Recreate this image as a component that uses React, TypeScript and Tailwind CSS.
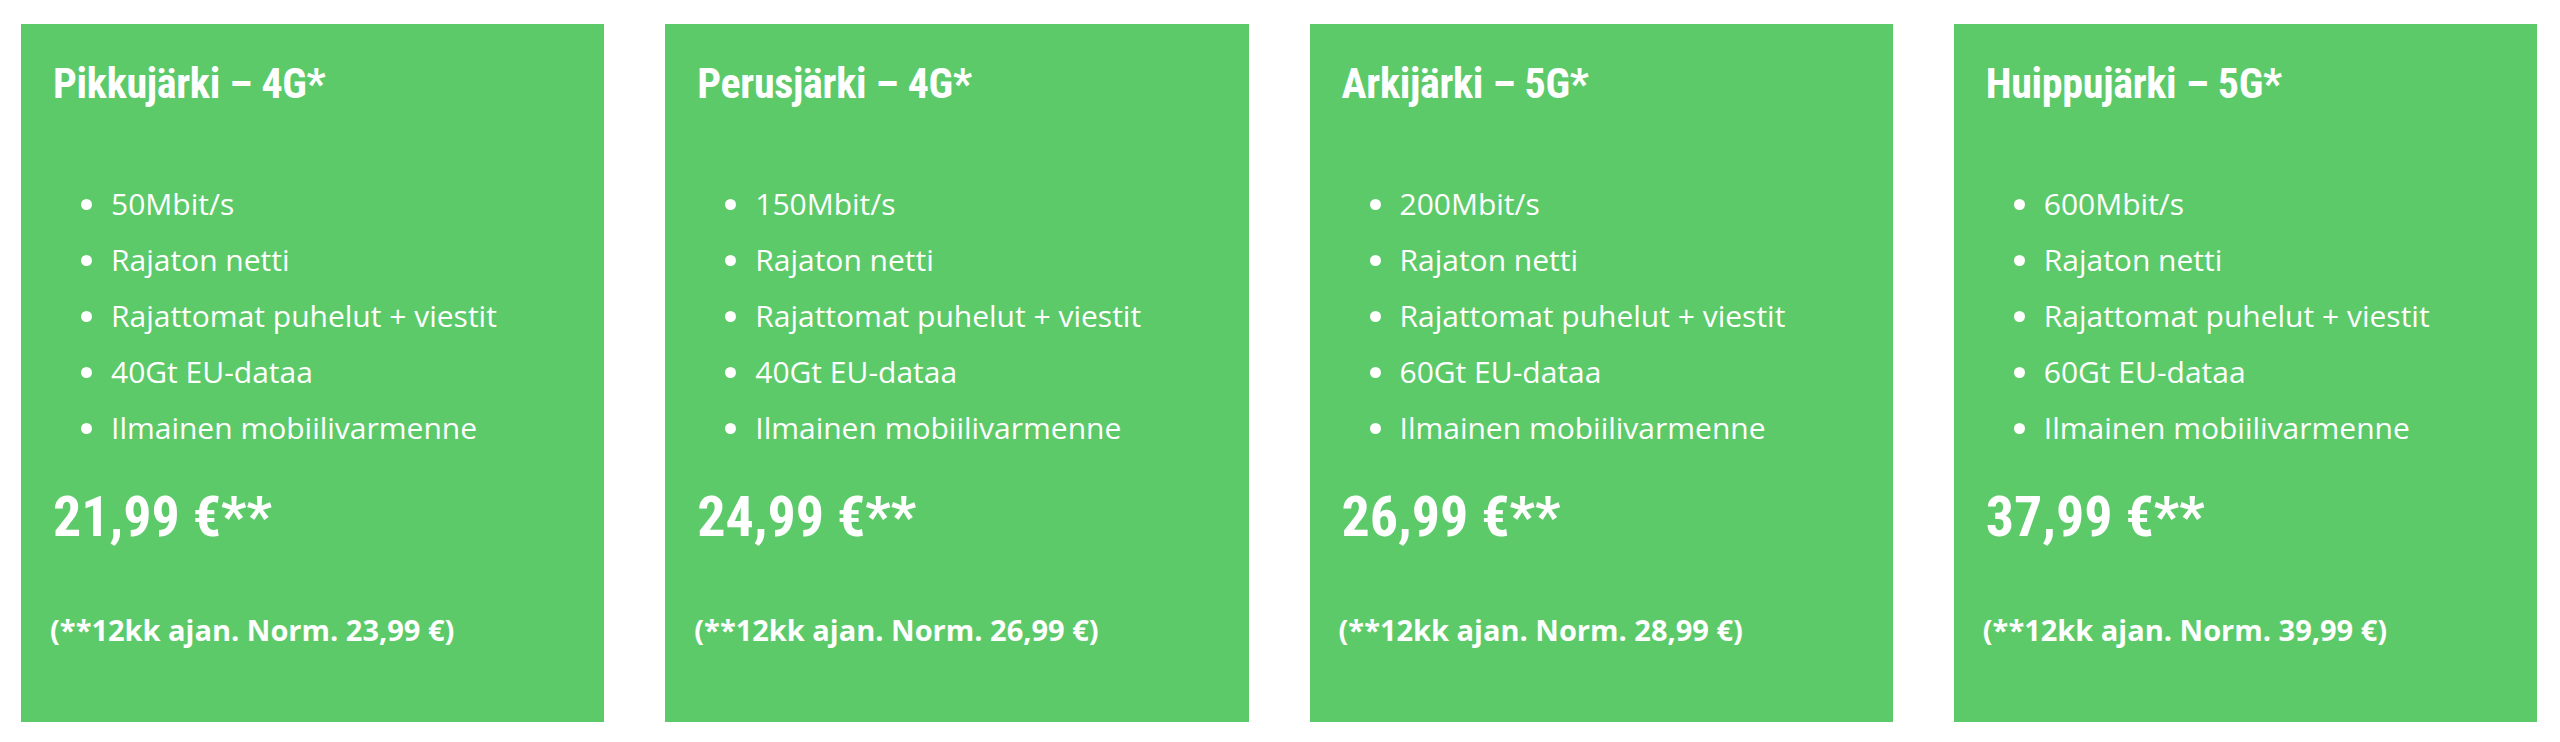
const plans = [
  {
    name: 'Pikkujärki – 4G*',
    speed: '50Mbit/s',
    eu: '40Gt EU-dataa',
    price: '21,99 €**',
    norm: '(**12kk ajan. Norm. 23,99 €)',
  },
  {
    name: 'Perusjärki – 4G*',
    speed: '150Mbit/s',
    eu: '40Gt EU-dataa',
    price: '24,99 €**',
    norm: '(**12kk ajan. Norm. 26,99 €)',
  },
  {
    name: 'Arkijärki – 5G*',
    speed: '200Mbit/s',
    eu: '60Gt EU-dataa',
    price: '26,99 €**',
    norm: '(**12kk ajan. Norm. 28,99 €)',
  },
  {
    name: 'Huippujärki – 5G*',
    speed: '600Mbit/s',
    eu: '60Gt EU-dataa',
    price: '37,99 €**',
    norm: '(**12kk ajan. Norm. 39,99 €)',
  },
];

function PlanCard({ plan }: { plan: (typeof plans)[number] }) {
  const features = [
    plan.speed,
    'Rajaton netti',
    'Rajattomat puhelut + viestit',
    plan.eu,
    'Ilmainen mobiilivarmenne',
  ];
  return (
    <div className="flex-1 h-[698px] bg-[#5dca6a] text-white px-[32px] pt-[39px]">
      {/* otsikko */}
      <h3 className="font-['Roboto',sans-serif] font-bold font-stretch-semi-condensed text-[42px] leading-[42px] tracking-[-0.3px]">
        {plan.name}
      </h3>

      {/* ominaisuudet */}
      <ul className="list-disc pl-[56px] mt-[71px] font-['Open_Sans',sans-serif] text-[30px] leading-[56px]">
        {features.map((f) => (
          <li key={f} className="pl-[2px]">{f}</li>
        ))}
      </ul>

      {/* hinta */}
      <div className="mt-[33px] font-['Roboto',sans-serif] font-bold font-stretch-semi-condensed text-[56px] leading-[56px]">
        {plan.price}
      </div>

      <p className="mt-[70px] -ml-[3px] font-['Open_Sans',sans-serif] font-bold text-[29px] leading-[29px]">
        {plan.norm}
      </p>
    </div>
  );
}

export default function App() {
  return (
    <div className="w-[2560px] h-[742px] bg-white flex gap-[61px] pl-[21px] pr-[23px] pt-[24px]">
      {plans.map((p) => (
        <PlanCard key={p.name} plan={p} />
      ))}
    </div>
  );
}
